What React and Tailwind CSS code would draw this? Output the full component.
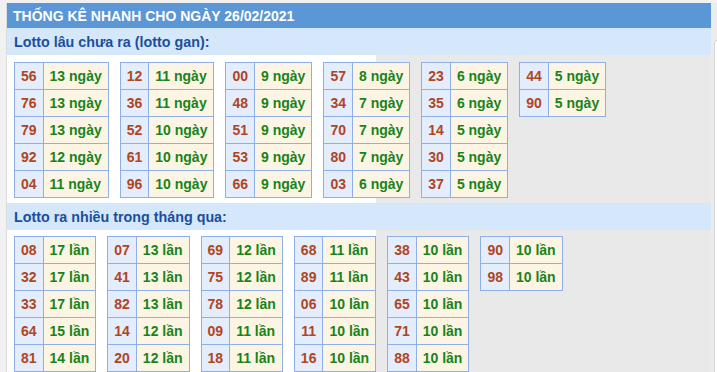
const gan = [
  [['56', '13 ngày'], ['76', '13 ngày'], ['79', '13 ngày'], ['92', '12 ngày'], ['04', '11 ngày']],
  [['12', '11 ngày'], ['36', '11 ngày'], ['52', '10 ngày'], ['61', '10 ngày'], ['96', '10 ngày']],
  [['00', '9 ngày'], ['48', '9 ngày'], ['51', '9 ngày'], ['53', '9 ngày'], ['66', '9 ngày']],
  [['57', '8 ngày'], ['34', '7 ngày'], ['70', '7 ngày'], ['80', '7 ngày'], ['03', '6 ngày']],
  [['23', '6 ngày'], ['35', '6 ngày'], ['14', '5 ngày'], ['30', '5 ngày'], ['37', '5 ngày']],
  [['44', '5 ngày'], ['90', '5 ngày']],
];

const nhieu = [
  [['08', '17 lần'], ['32', '17 lần'], ['33', '17 lần'], ['64', '15 lần'], ['81', '14 lần']],
  [['07', '13 lần'], ['41', '13 lần'], ['82', '13 lần'], ['14', '12 lần'], ['20', '12 lần']],
  [['69', '12 lần'], ['75', '12 lần'], ['78', '12 lần'], ['09', '11 lần'], ['18', '11 lần']],
  [['68', '11 lần'], ['89', '11 lần'], ['06', '10 lần'], ['11', '10 lần'], ['16', '10 lần']],
  [['38', '10 lần'], ['43', '10 lần'], ['65', '10 lần'], ['71', '10 lần'], ['88', '10 lần']],
  [['90', '10 lần'], ['98', '10 lần']],
];

const Block = ({ rows }) => (
  <div className="grid grid-cols-[auto_auto] border-l border-t border-[#8fb0e6]">
    {rows.map(([num, val]) => (
      <div key={num} className="contents">
        <div className="h-[27px] px-[6px] pt-[1px] flex items-center justify-center bg-[#e3edfb] text-[#b0451f] border-r border-b border-[#8fb0e6]">
          {num}
        </div>
        <div className="h-[27px] px-[6px] pt-[1px] flex items-center bg-[#fdf5e4] text-[#19831b] border-r border-b border-[#8fb0e6]">
          {val}
        </div>
      </div>
    ))}
  </div>
);

const Section = ({ title, blocks, top }) => (
  <>
    <div className="h-[27px] shrink-0 pl-[7px] pt-[2px] flex items-center bg-[#d4e7fb] text-[#1c4e9c] text-[14.3px]">
      {title}
    </div>
    <div
      className={`shrink-0 flex items-start gap-x-[11px] pl-[7px] pb-[5px] bg-[linear-gradient(to_right,#ffffff_369px,#e9e9e9_369px)] ${top}`}
    >
      {blocks.map((rows, i) => (
        <Block key={i} rows={rows} />
      ))}
    </div>
  </>
);

export default function App() {
  return (
    <div className="w-[717px] h-[372px] overflow-hidden flex bg-[#f1f1f1] pt-[3px] font-['Liberation_Sans',Arial,sans-serif] font-bold text-[14px]">
      <div className="w-[7px] shrink-0 border-r border-[#dcdcdc]" />
      <div className="w-[704px] shrink-0 flex flex-col">
        <div className="h-[25px] shrink-0 pl-[6px] pt-[1px] flex items-center bg-[#5b96d6] text-white">
          THỐNG KÊ NHANH CHO NGÀY 26/02/2021
        </div>
        <Section title="Lotto lâu chưa ra (lotto gan):" blocks={gan} top="pt-[7px]" />
        <Section title="Lotto ra nhiều trong tháng qua:" blocks={nhieu} top="pt-[6px]" />
      </div>
      <div className="flex-1 flex flex-col bg-[#ececec]">
        <div className="h-[37px]" />
        <div className="flex-1 ml-[3px] bg-white border-l border-t border-[#d6d6d6] rounded-tl-[4px]" />
      </div>
    </div>
  );
}
